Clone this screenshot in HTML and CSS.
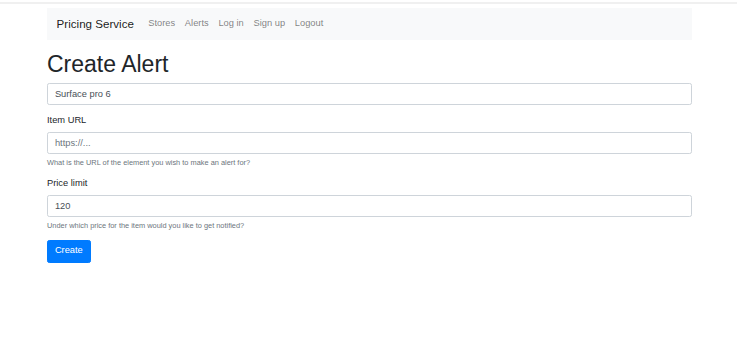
FILE: index.html
```html
<!DOCTYPE html>
<html lang="en">
<head>
    <meta charset="UTF-8">
    <meta name="viewport" content="width=device-width, initial-scale=1.0">
    <title>Create Alert</title>
    <link rel="stylesheet" href="styles.css">
</head>
<body>
    <div class="top-line"></div>
    <div class="container">
        <nav class="navbar">
            <a class="navbar-brand" href="#">Pricing Service</a>
            <ul class="navbar-nav">
                <li><a class="nav-link" href="#">Stores</a></li>
                <li><a class="nav-link" href="#">Alerts</a></li>
                <li><a class="nav-link" href="#">Log in</a></li>
                <li><a class="nav-link" href="#">Sign up</a></li>
                <li><a class="nav-link" href="#">Logout</a></li>
            </ul>
        </nav>

        <h1>Create Alert</h1>
        <form id="alertForm">
            <div class="form-group">
                <input type="text" class="form-control" name="name" value="Surface pro 6">
            </div>
            <div class="form-group">
                <label for="itemUrl">Item URL</label>
                <input type="url" class="form-control" id="itemUrl" name="url" placeholder="https://...">
                <small class="form-text">What is the URL of the element you wish to make an alert for?</small>
            </div>
            <div class="form-group">
                <label for="priceLimit">Price limit</label>
                <input type="number" class="form-control" id="priceLimit" name="price_limit" value="120">
                <small class="form-text">Under which price for the item would you like to get notified?</small>
            </div>
            <button type="submit" class="btn-primary">Create</button>
        </form>
    </div>
</body>
</html>
```

FILE: styles.css
```css
body {
    font-family: "Liberation Sans", Arial, sans-serif;
    font-size: 9.3px;
    line-height: 1.5;
    color: #212529;
    background-color: #fff;
    margin: 0;
}
.top-line {
    height: 2px;
    margin-top: 2px;
    background-color: #f0f0f0;
}
.container {
    width: 645px;
    margin: 0 0 0 47px;
}
.navbar {
    display: flex;
    align-items: center;
    margin-top: 4px;
    padding: 4.6px 9.6px;
    background-color: #f8f9fa;
}
.navbar-brand {
    font-size: 11.6px;
    line-height: 1.5;
    padding: 2.6px 0;
    margin-right: 9.4px;
    color: rgba(0, 0, 0, 0.9);
    text-decoration: none;
}
.navbar-nav {
    display: flex;
    list-style: none;
    margin: 0;
    padding: 0;
}
.nav-link {
    display: block;
    padding: 4.6px 4.9px;
    color: rgba(0, 0, 0, 0.5);
    text-decoration: none;
}
h1 {
    font-size: 23px;
    font-weight: 500;
    line-height: 1.2;
    margin: 11px 0 3.6px;
}
.form-group {
    margin-bottom: 9.2px;
}
.form-group label {
    display: inline-block;
    margin-bottom: 4.6px;
}
.form-control {
    display: block;
    width: 100%;
    height: 22px;
    padding: 3.4px 6.9px;
    font-family: inherit;
    font-size: 9.3px;
    line-height: 1.5;
    color: #495057;
    background-color: #fff;
    border: 1px solid #ced4da;
    border-radius: 2.3px;
    box-sizing: border-box;
    margin: 0;
    -moz-appearance: textfield;
}
.form-control::placeholder {
    color: #6c757d;
}
.form-control::-webkit-inner-spin-button,
.form-control::-webkit-outer-spin-button {
    -webkit-appearance: none;
    margin: 0;
}
.form-text {
    display: block;
    margin-top: 2.3px;
    font-size: 7.4px;
    color: #6c757d;
}
.btn-primary {
    font-family: inherit;
    font-size: 9.3px;
    line-height: 1.5;
    padding: 3.4px 6.9px;
    color: #fff;
    background-color: #007bff;
    border: 1px solid #007bff;
    border-radius: 2.3px;
    cursor: pointer;
}
.btn-primary:hover {
    background-color: #0069d9;
}
```
